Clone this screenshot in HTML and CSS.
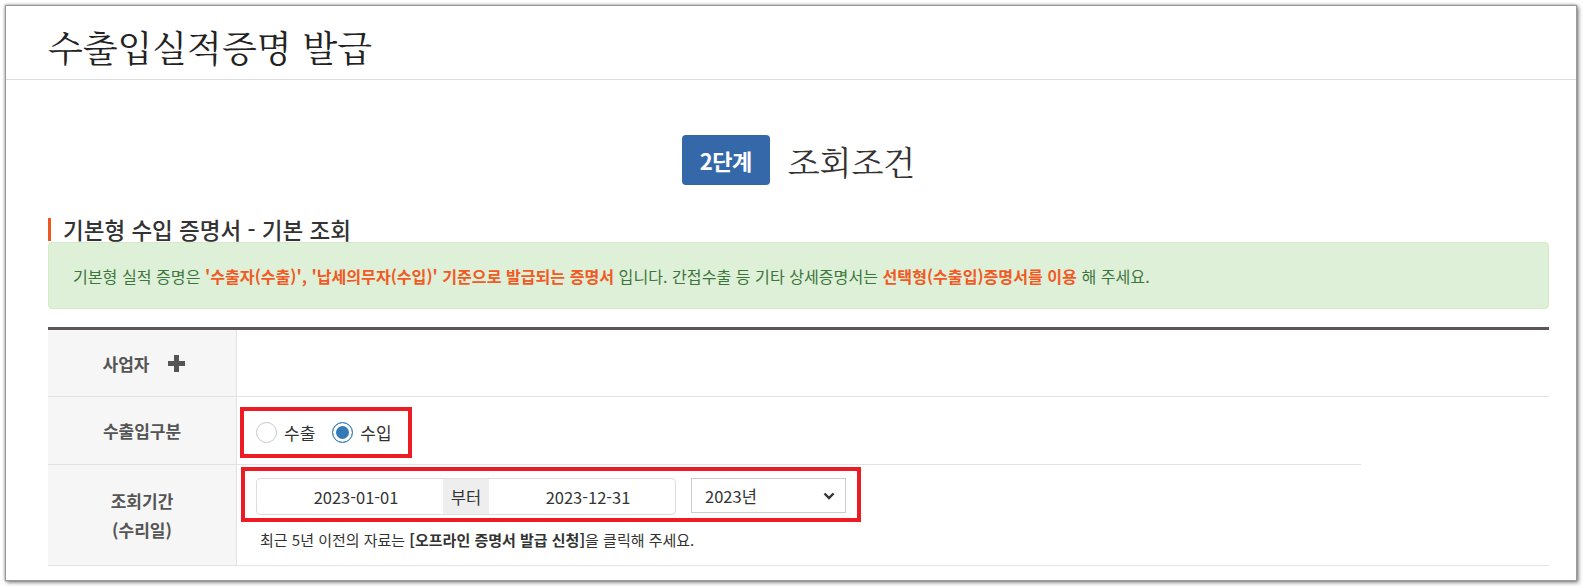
FILE: index.html
```html
<!DOCTYPE html>
<html lang="ko">
<head>
    <meta charset="UTF-8">
    <meta name="viewport" content="width=device-width, initial-scale=1.0">
    <title>수출입실적증명 발급</title>
    <link rel="stylesheet" href="styles.css">
</head>
<body>
    <div class="frame">
        <div class="page-head">
            <h1 class="page-title">수출입실적증명 발급</h1>
        </div>

        <div class="content">
            <div class="step">
                <span class="step-badge">2단계</span>
                <span class="step-title">조회조건</span>
            </div>

            <h3 class="sec-title">기본형 수입 증명서 - 기본 조회</h3>
            <div class="notice">
                <p>기본형 실적 증명은 <b class="hl">'수출자(수출)', '납세의무자(수입)' 기준으로 발급되는 증명서</b> 입니다. 간접수출 등 기타 상세증명서는 <b class="hl">선택형(수출입)증명서를 이용</b> 해 주세요.</p>
            </div>

            <div class="form-table">
                <div class="row row-biz">
                    <div class="th">
                        <span>사업자</span>
                        <svg class="plus" width="17" height="17" viewBox="0 0 17 17">
                            <rect x="6" y="0" width="5" height="17" fill="#555"/>
                            <rect x="0" y="6" width="17" height="5" fill="#555"/>
                        </svg>
                    </div>
                    <div class="td"></div>
                </div>

                <div class="row row-type">
                    <div class="th">수출입구분</div>
                    <div class="td">
                        <div class="mark radios">
                            <label class="radio"><span class="dot"></span>수출</label>
                            <label class="radio"><span class="dot on"></span>수입</label>
                        </div>
                    </div>
                </div>

                <div class="row row-period">
                    <div class="th">조회기간<br>(수리일)</div>
                    <div class="td">
                        <div class="mark period">
                            <div class="date-group">
                                <span class="date">2023-01-01</span>
                                <span class="addon">부터</span>
                                <span class="date">2023-12-31</span>
                            </div>
                            <div class="select">
                                <span>2023년</span>
                                <svg width="12" height="8" viewBox="0 0 12 8">
                                    <path d="M1.5 1.5 L6 6 L10.5 1.5" fill="none" stroke="#333" stroke-width="2.4"/>
                                </svg>
                            </div>
                        </div>
                        <p class="help">최근 5년 이전의 자료는 <b>[오프라인 증명서 발급 신청]</b>을 클릭해 주세요.</p>
                    </div>
                </div>
            </div>
        </div>
    </div>
</body>
</html>
```

FILE: styles.css
```css
body { margin: 0; padding: 5px; background: #fff; color: #333; font-family: "Noto Sans CJK KR", "Noto Sans", sans-serif; }
.frame { box-sizing: border-box; width: 1572px; height: 576px; border: 1px solid #999; background: #fff; overflow: hidden; box-shadow: 0 0 3px rgba(0, 0, 0, 0.45), 2px 2px 4px rgba(0, 0, 0, 0.35); }

/* page header */
.page-head { height: 73px; border-bottom: 1px solid #ddd; padding-left: 42px; }
.page-title { margin: 0; padding-top: 10px; font: 400 36px/61px "Noto Serif CJK KR", "Noto Sans CJK KR", serif; color: #222; }

.content { padding: 0 27px 0 42px; }

/* step */
.step { display: flex; justify-content: center; align-items: center; gap: 18px; height: 50px; margin-top: 55px; }
.step-badge { display: flex; align-items: center; justify-content: center; width: 88px; height: 50px; border-radius: 4px; background: #3568a9; color: #fff; font-size: 22px; font-weight: 700; letter-spacing: -0.5px; }
.step-title { font: 400 33px "Noto Serif CJK KR", "Noto Sans CJK KR", serif; color: #333; }

/* section title + notice */
.sec-title { margin: 33px 0 0; height: 23px; padding-left: 12px; border-left: 3px solid #f0571e; font-size: 22.5px; line-height: 23px; font-weight: 500; color: #333; }
.notice { box-sizing: border-box; display: flex; align-items: center; height: 67px; margin-top: 1px; padding-left: 24px; border: 1px solid #d6e9c6; border-radius: 4px; background: #dff0d8; color: #3c763d; font-size: 16.1px; }
.notice p { margin: 0; }
.hl { color: #f15a24; font-weight: 700; }

/* form table */
.form-table { margin-top: 18px; border-top: 3px solid #5f5558; }
.row { display: flex; border-bottom: 1px solid #e3e3e3; }
.row-biz { height: 66px; }
.row-type { height: 67px; margin-right: 188px; }
.row-period { height: 100px; }
.th { box-sizing: border-box; flex: none; display: flex; align-items: center; justify-content: center; width: 189px; border-right: 1px solid #e3e3e3; background: #f6f6f6; color: #555; font-size: 17px; font-weight: 700; line-height: 29px; text-align: center; }
.row-biz .th { gap: 19px; padding-left: 4px; }
.td { flex: 1; }
.row-type .td { padding: 10px 0 0 3px; }
.row-period .td { padding: 2px 0 0 4px; }

/* red annotation boxes */
.mark { box-sizing: border-box; display: inline-flex; align-items: center; border: 4px solid #ed1c24; }
.radios { width: 172px; height: 51px; padding-left: 12px; }
.period { align-items: flex-start; padding: 7px 11px 3px; }

.radio { display: inline-flex; align-items: center; font-size: 17px; color: #333; }
.radio + .radio { margin-left: 17px; }
.dot { box-sizing: border-box; width: 21px; height: 21px; margin-right: 7px; border: 1px solid #c8c8c8; border-radius: 50%; background: #fff; }
.dot.on { border-color: #337ab7; background: #337ab7; box-shadow: inset 0 0 0 3px #fff; }

.date-group { box-sizing: border-box; display: flex; width: 420px; height: 37px; border: 1px solid #ddd; border-radius: 4px; overflow: hidden; }
.date { flex: 1; display: flex; align-items: center; justify-content: center; padding-left: 12px; font-size: 16.5px; color: #333; }
.addon { display: flex; align-items: center; justify-content: center; width: 46px; background: #eee; font-size: 16.5px; color: #333; }
.select { box-sizing: border-box; display: flex; align-items: center; justify-content: space-between; width: 155px; height: 35px; margin-left: 15px; padding: 0 10px 0 13px; border: 1px solid #ccc; font-size: 16.5px; color: #333; }

.help { margin: 8px 0 0 19px; font-size: 15px; line-height: 20px; color: #333; }
.help b { font-weight: 700; }
```
